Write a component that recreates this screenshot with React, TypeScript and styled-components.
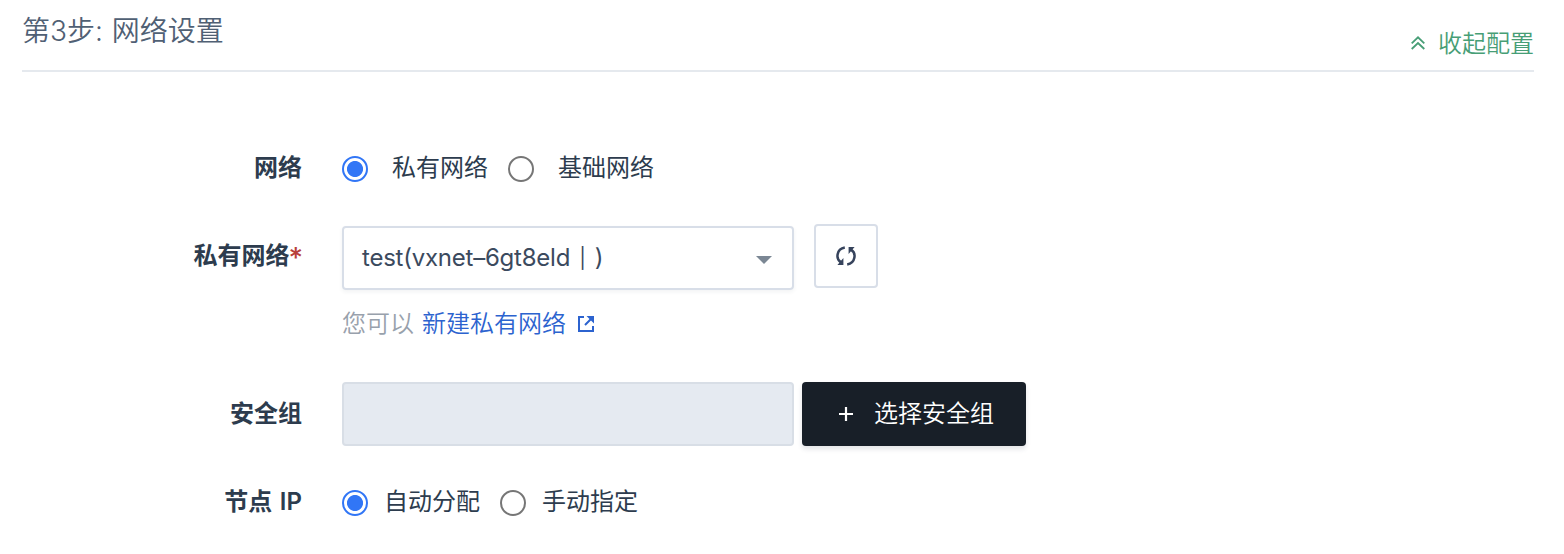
import React from 'react';
import styled, { createGlobalStyle } from 'styled-components';

const GlobalStyle = createGlobalStyle`
  * { box-sizing: border-box; }
  body {
    margin: 0;
    background: #fff;
    color: #2d3c4e;
    font-family: Inter, "Noto Sans CJK SC", sans-serif;
    font-size: 24px;
    line-height: 36px;
  }
`;

const Page = styled.main`
  width: 1564px;
  height: 554px;
  padding: 0 30px 0 22px;
  overflow: hidden;
`;

const Header = styled.header`
  display: flex;
  justify-content: space-between;
  height: 72px;
  border-bottom: 2px solid #e5e9ee;
`;

const Title = styled.h2`
  margin: 11px 0 0;
  font-size: 28px;
  font-weight: 350;
  line-height: 40px;
  word-spacing: 1px;
  color: #506074;
`;

const Collapse = styled.a`
  display: flex;
  align-items: center;
  height: 36px;
  margin-top: 26px;
  color: #479e76;
  font-weight: 350;
  svg { margin: -2px 13px 0 0; }
`;

const Form = styled.form`
  padding-top: 78px;
`;

const Row = styled.div<{ $gap: number }>`
  display: flex;
  align-items: flex-start;
  margin-bottom: ${p => p.$gap}px;
`;

const Label = styled.div<{ $top?: number }>`
  width: 280px;
  margin: ${p => p.$top ?? 0}px 40px 0 0;
  text-align: right;
  font-weight: 600;
  word-spacing: 1.5px;
  white-space: nowrap;
`;

const Required = styled.span`
  margin: 0 -1px;
  color: #b8403a;
  font-size: 28px;
  font-weight: 500;
  line-height: 1;
  vertical-align: -4px;
`;

const RadioGroup = styled.div`
  display: flex;
  align-items: center;
  height: 36px;
`;

const RadioLabel = styled.label<{ $gap: number }>`
  display: flex;
  align-items: center;
  margin-right: 20px;
  gap: ${p => p.$gap}px;
`;

const Radio = styled.input`
  appearance: none;
  width: 26px;
  height: 26px;
  margin: 2px 0 0;
  border: 2px solid #767676;
  border-radius: 50%;
  background: #fff;
  &:checked {
    border-color: #3176f6;
    background: radial-gradient(circle, #3176f6 7.6px, #fff 8.4px);
  }
`;

const Select = styled.div`
  display: flex;
  align-items: center;
  justify-content: space-between;
  width: 452px;
  height: 64px;
  margin: 2px 20px 0 0;
  padding: 0 20px 0 18px;
  border: 2px solid #d8dee8;
  border-radius: 4px;
  box-shadow: 0 2px 4px rgba(36, 46, 66, 0.06);
  color: #3b4a5e;
`;

const SelectValue = styled.span`
  letter-spacing: -0.23px;
  word-spacing: 2.6px;
`;

const Divider = styled.span`
  font-size: 20px;
  line-height: 1;
  vertical-align: 1px;
`;

const Caret = styled.span`
  margin-top: 4px;
  border: 8px solid transparent;
  border-top-color: #7b8794;
  border-bottom: 0;
`;

const IconButton = styled.button`
  display: flex;
  align-items: center;
  justify-content: center;
  width: 64px;
  height: 64px;
  padding: 0;
  border: 2px solid #d8dee8;
  border-radius: 4px;
  background: #fff;
`;

const Hint = styled.div`
  display: flex;
  align-items: center;
  margin-top: 16px;
  color: #98a1ac;
  font-weight: 350;
`;

const HintLink = styled.a`
  display: flex;
  align-items: center;
  margin-left: 8px;
  color: #2c63cf;
  svg { margin-left: 12px; }
`;

const Inline = styled.div`
  display: flex;
  align-items: flex-start;
`;

const DisabledInput = styled.input`
  width: 452px;
  height: 64px;
  margin-right: 8px;
  border: 2px solid #d8dee6;
  border-radius: 4px;
  background: #e5eaf1;
`;

const DarkButton = styled.button`
  display: flex;
  align-items: center;
  width: 224px;
  height: 64px;
  padding: 0 0 0 37px;
  border: 0;
  border-radius: 4px;
  background: #181f28;
  box-shadow: 0 3px 5px rgba(36, 46, 66, 0.13);
  color: #fff;
  font: inherit;
  font-weight: 350;
  svg { margin-right: 21px; }
`;

export default function App() {
  return (
    <>
      <GlobalStyle />
      <Page>
        <Header>
          <Title>第3步: 网络设置</Title>
          <Collapse>
            <svg width="14" height="14" viewBox="0 0 14 14" fill="none" stroke="currentColor" strokeWidth="1.8">
              <path d="M.7 7.3 7 1.3l6.3 6M.7 13 7 7l6.3 6" />
            </svg>
            收起配置
          </Collapse>
        </Header>
        <Form>
          <Row $gap={38}>
            <Label>网络</Label>
            <RadioGroup>
              <RadioLabel $gap={24}><Radio type="radio" name="network" defaultChecked />私有网络</RadioLabel>
              <RadioLabel $gap={24}><Radio type="radio" name="network" />基础网络</RadioLabel>
            </RadioGroup>
          </Row>
          <Row $gap={40}>
            <Label $top={14}>私有网络<Required>*</Required></Label>
            <div>
              <Inline>
                <Select>
                  <SelectValue>test(vxnet–6gt8eld&nbsp;<Divider>|</Divider>&nbsp;)</SelectValue>
                  <Caret />
                </Select>
                <IconButton type="button" aria-label="刷新">
                  <svg width="22" height="22" viewBox="0 0 22 22" fill="none" stroke="#36435c" strokeWidth="2.5">
                    <path d="M9.8 2.6C1.4 4 .4 14 6 17.4M12.2 19.4C20.6 18 21.6 8 16 4.6" />
                    <path d="M2.4 20h6v-7zM19.6 2h-6v7z" fill="#36435c" stroke="none" />
                  </svg>
                </IconButton>
              </Inline>
              <Hint>
                您可以
                <HintLink>
                  新建私有网络
                  <svg width="16" height="16" viewBox="0 0 16 16" fill="none" stroke="currentColor" strokeWidth="2">
                    <path d="M6 1H1v14h14v-5M7 9l6-6" />
                    <path d="M8.5 0H16v7.5z" fill="currentColor" stroke="none" />
                  </svg>
                </HintLink>
              </Hint>
            </div>
          </Row>
          <Row $gap={38}>
            <Label $top={14}>安全组</Label>
            <Inline>
              <DisabledInput disabled />
              <DarkButton type="button">
                <svg width="14" height="14" viewBox="0 0 14 14" stroke="currentColor" strokeWidth="2.2">
                  <path d="M7 0v14M0 7h14" />
                </svg>
                选择安全组
              </DarkButton>
            </Inline>
          </Row>
          <Row $gap={0}>
            <Label>节点 IP</Label>
            <RadioGroup>
              <RadioLabel $gap={16}><Radio type="radio" name="ip" defaultChecked />自动分配</RadioLabel>
              <RadioLabel $gap={16}><Radio type="radio" name="ip" />手动指定</RadioLabel>
            </RadioGroup>
          </Row>
        </Form>
      </Page>
    </>
  );
}
